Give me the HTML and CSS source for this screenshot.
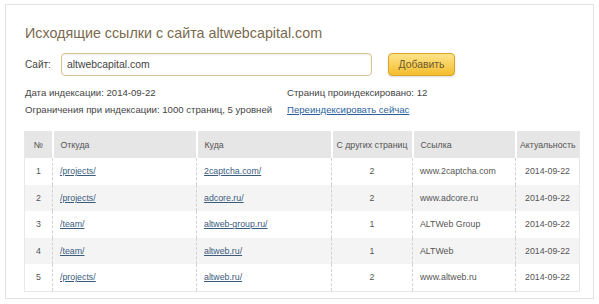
FILE: index.html
```html
<!DOCTYPE html>
<html lang="ru">

<head>
  <meta charset="UTF-8">
  <title>Исходящие ссылки</title>
  <link rel="stylesheet" href="styles.css">
</head>

<body>
  <div class="card">
    <h1 class="title">Исходящие ссылки с сайта altwebcapital.com</h1>

    <form class="site-form">
      <label class="site-label" for="site">Сайт:</label>
      <input type="text" id="site" class="site-input" value="altwebcapital.com">
      <button type="button" class="btn-add">Добавить</button>
    </form>

    <div class="info">
      <div>Дата индексации: 2014-09-22</div>
      <div>Страниц проиндексировано: 12</div>
      <div>Ограничения при индексации: 1000 страниц, 5 уровней</div>
      <div><a href="#" class="reindex">Переиндексировать сейчас</a></div>
    </div>

    <table class="links">
      <colgroup>
        <col class="c-num">
        <col class="c-from">
        <col class="c-to">
        <col class="c-count">
        <col class="c-anchor">
        <col class="c-date">
      </colgroup>
      <thead>
        <tr>
          <th class="center">№</th>
          <th>Откуда</th>
          <th>Куда</th>
          <th class="center">С других страниц</th>
          <th>Ссылка</th>
          <th class="center">Актуальность</th>
        </tr>
      </thead>
      <tbody>
        <tr>
          <td class="center">1</td>
          <td><a href="#">/projects/</a></td>
          <td><a href="#">2captcha.com/</a></td>
          <td class="center">2</td>
          <td>www.2captcha.com</td>
          <td class="center">2014-09-22</td>
        </tr>
        <tr>
          <td class="center">2</td>
          <td><a href="#">/projects/</a></td>
          <td><a href="#">adcore.ru/</a></td>
          <td class="center">2</td>
          <td>www.adcore.ru</td>
          <td class="center">2014-09-22</td>
        </tr>
        <tr>
          <td class="center">3</td>
          <td><a href="#">/team/</a></td>
          <td><a href="#">altweb-group.ru/</a></td>
          <td class="center">1</td>
          <td>ALTWeb Group</td>
          <td class="center">2014-09-22</td>
        </tr>
        <tr>
          <td class="center">4</td>
          <td><a href="#">/team/</a></td>
          <td><a href="#">altweb.ru/</a></td>
          <td class="center">1</td>
          <td>ALTWeb</td>
          <td class="center">2014-09-22</td>
        </tr>
        <tr>
          <td class="center">5</td>
          <td><a href="#">/projects/</a></td>
          <td><a href="#">altweb.ru/</a></td>
          <td class="center">2</td>
          <td>www.altweb.ru</td>
          <td class="center">2014-09-22</td>
        </tr>
      </tbody>
    </table>
  </div>
</body>

</html>
```

FILE: styles.css
```css
body {
  margin: 0;
  background: #fff;
  font-family: "Liberation Sans", Arial, sans-serif;
  color: #444;
}

.card {
  margin: 4px 0 0 5px;
  width: 568px;
  height: 293px;
  padding: 0 0 0 19px;
  border: 1px solid #e2e2e2;
  overflow: hidden;
}

.title {
  margin: 0;
  padding-top: 19px;
  font-size: 14.3px;
  font-weight: normal;
  line-height: 18px;
  color: #7a6a4e;
}

.site-form {
  display: flex;
  align-items: center;
  margin-top: 11px;
  height: 23px;
}

.site-label {
  width: 36px;
  font-size: 10px;
  color: #444;
}

.site-input {
  width: 311px;
  height: 23px;
  box-sizing: border-box;
  padding: 0 5px;
  border: 1px solid #d9c48a;
  border-radius: 4px;
  font-family: inherit;
  font-size: 10.4px;
  color: #444;
  box-shadow: inset 0 1px 2px rgba(0, 0, 0, 0.08);
}

.btn-add {
  margin-left: 16px;
  width: 67px;
  height: 23px;
  padding: 0;
  border: 1px solid #d6a52a;
  border-radius: 4px;
  background: linear-gradient(#fde48a, #f3bd2e);
  font-family: inherit;
  font-size: 10.4px;
  color: #6e5a2c;
  box-shadow: 0 1px 2px rgba(0, 0, 0, 0.15);
  cursor: pointer;
}

.info {
  display: grid;
  grid-template-columns: 262px auto;
  row-gap: 4px;
  margin-top: 10px;
  font-size: 9.6px;
  line-height: 13px;
  color: #444;
}

.reindex {
  color: #2d5f9e;
}

.links {
  margin: 15px 0 0 -1px;
  width: 555px;
  table-layout: fixed;
  border-collapse: collapse;
  font-size: 8.8px;
  border: 1px solid #e8e8e8;
  border-top: none;
}

.c-num { width: 28px; }
.c-from { width: 144px; }
.c-to { width: 135px; }
.c-count { width: 81px; }
.c-anchor { width: 103px; }
.c-date { width: 64px; }

.links th {
  height: 27px;
  padding: 0 0 0 7px;
  background: #e6e6e6;
  border-left: 2px solid #fff;
  font-weight: normal;
  text-align: left;
  color: #555;
  white-space: nowrap;
}

.links th:first-child {
  border-left: none;
}

.links td {
  height: 26.5px;
  padding: 0 0 0 7px;
  border-left: 1px dashed #d2d2d2;
  color: #555;
}

.links td:first-child {
  border-left: none;
}

.links .center {
  text-align: center;
  padding: 0;
}

.links tbody tr:nth-child(even) {
  background: #f4f4f4;
}

.links a {
  color: #3b5b7c;
}
```
